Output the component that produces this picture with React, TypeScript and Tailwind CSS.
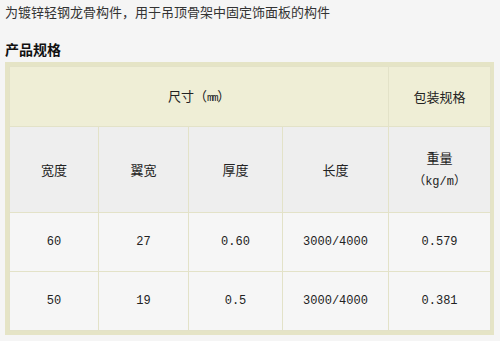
import React from "react";

const cjk = "font-['Noto_Sans_CJK_SC','Noto_Sans',sans-serif]";
const mono = "font-['Liberation_Mono','Noto_Sans_CJK_SC',monospace]";

type Row = { width: string; wing: string; thick: string; length: string; weight: string };

const rows: Row[] = [
    {width: "60", wing: "27", thick: "0.60", length: "3000/4000", weight: "0.579"},
    {width: "50", wing: "19", thick: "0.5", length: "3000/4000", weight: "0.381"},
];

export default function App() {
    const cell = "border border-[#e3e2c8] text-center align-middle p-0";

    return (
        <div className={`min-h-[341px] w-[500px] bg-[#f5f5f5] px-[5px] text-[#222] ${cjk}`}>
            <p className="h-[24px] text-[13px] leading-[24px] text-[#333]">
                为镀锌轻钢龙骨构件，用于吊顶骨架中固定饰面板的构件
            </p>
            <h3 className="mt-[15px] h-[20px] text-[14px] font-bold leading-[20px] text-[#111]">产品规格</h3>

            <div className="mt-[3px] w-[489px] border-4 border-[#e5e4c6]">
                <table className="w-full table-fixed border-collapse text-[13px]">
                    <colgroup>
                        <col className="w-[89px]"/>
                        <col className="w-[90px]"/>
                        <col className="w-[94px]"/>
                        <col className="w-[106px]"/>
                        <col className="w-[102px]"/>
                    </colgroup>
                    <tbody>
                        <tr className="h-[60px] bg-[#efeed6]">
                            <td colSpan={4} className={cell}>
                                尺寸（<span className={`${mono} text-[11px] tracking-[-1.5px]`}>mm</span>）
                            </td>
                            <td className={cell}>包装规格</td>
                        </tr>
                        <tr className="h-[86px] bg-[#eeeeee]">
                            <td className={cell}>宽度</td>
                            <td className={cell}>翼宽</td>
                            <td className={cell}>厚度</td>
                            <td className={cell}>长度</td>
                            <td className={cell}>
                                <div className="leading-[24px]">
                                    <div>重量</div>
                                    <div className={`${mono} text-[12px]`}>（kg/m）</div>
                                </div>
                            </td>
                        </tr>
                        {rows.map((r) => (
                            <tr key={r.weight} className={`h-[59px] bg-[#f6f6f6] text-[12px] ${mono}`}>
                                <td className={cell}>{r.width}</td>
                                <td className={cell}>{r.wing}</td>
                                <td className={cell}>{r.thick}</td>
                                <td className={cell}>{r.length}</td>
                                <td className={cell}>{r.weight}</td>
                            </tr>
                        ))}
                    </tbody>
                </table>
            </div>
        </div>
    );
}
